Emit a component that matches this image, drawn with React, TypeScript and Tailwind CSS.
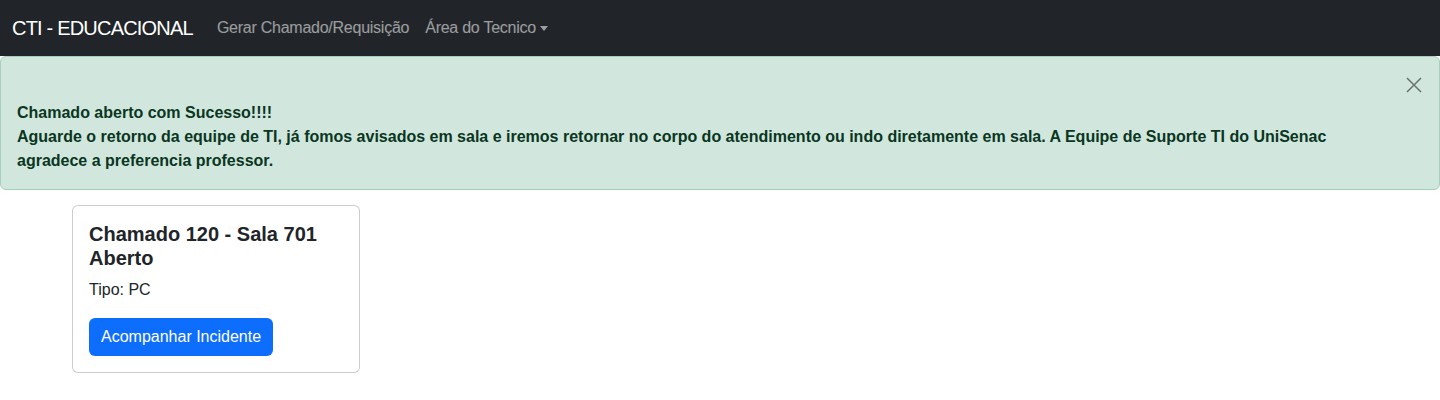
const sans = "font-['Liberation_Sans',Arial,sans-serif]";

function Navbar() {
  return (
    <nav className="flex h-14 items-center bg-[#212529] px-3">
      <span className="mr-4 text-xl tracking-[-0.8px] text-white">CTI - EDUCACIONAL</span>
      <div className="flex items-center">
        <a className="px-2 py-2 text-base tracking-[-0.25px] text-white/55">Gerar Chamado/Requisição</a>
        <a className="flex items-center px-2 py-2 text-base tracking-[-0.25px] text-white/55">
          Área do Tecnico
          <span className="ml-[4px] mt-[1px] h-0 w-0 border-x-[4px] border-t-[5px] border-x-transparent border-t-white/55" />
        </a>
      </div>
    </nav>
  );
}

function SuccessAlert() {
  return (
    <div className="relative rounded-md border border-[#a3cfbb] bg-[#d1e7dd] px-4 pb-4 pt-[44px] pr-12 text-base font-bold leading-6 text-[#0a3622]">
      <button className="absolute right-[17px] top-[20px] text-black/50" aria-label="Close">
        <svg viewBox="0 0 16 16" className="h-4 w-4" fill="none" stroke="currentColor" strokeWidth={1.5}>
          <path d="M1 1l14 14M15 1L1 15" />
        </svg>
      </button>
      <p>Chamado aberto com Sucesso!!!!</p>
      <p>
        Aguarde o retorno da equipe de TI, já fomos avisados em sala e iremos retornar no corpo do atendimento ou
        indo diretamente em sala. A Equipe de Suporte TI do UniSenac agradece a preferencia professor.
      </p>
    </div>
  );
}

function ChamadoCard() {
  return (
    <div className="w-[288px] rounded-md border border-black/20 bg-white p-4">
      <h5 className="mb-2 text-xl font-bold leading-6 text-[#212529]">
        Chamado 120 - Sala 701
        <br />
        Aberto
      </h5>
      <p className="mb-4 text-base leading-6 text-[#212529]">Tipo: PC</p>
      <button className="rounded-md bg-[#0d6efd] px-3 py-[7px] text-base leading-6 text-white">
        Acompanhar Incidente
      </button>
    </div>
  );
}

export default function App() {
  return (
    <div className={`min-h-[400px] bg-white ${sans}`}>
      <Navbar />
      <SuccessAlert />
      <div className="ml-[72px] mt-[15px]">
        <ChamadoCard />
      </div>
    </div>
  );
}
